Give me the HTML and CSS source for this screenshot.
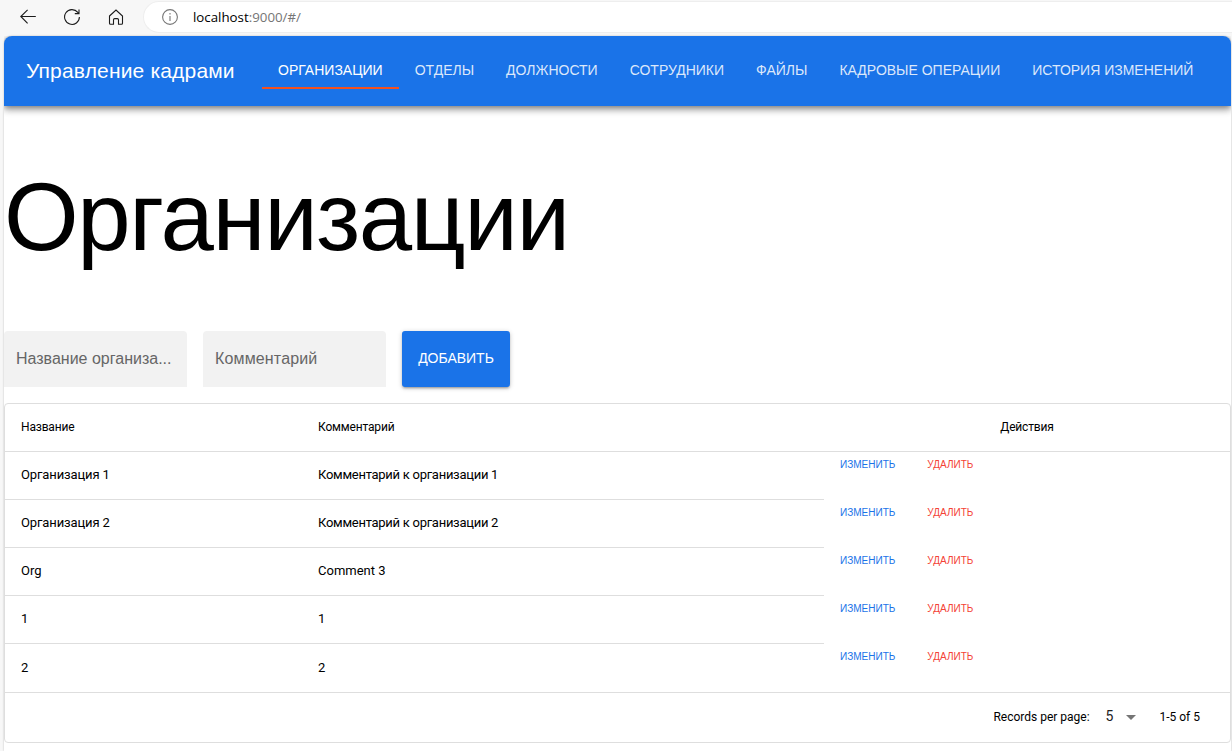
FILE: index.html
```html
<!DOCTYPE html>
<html lang="ru">
<head>
<meta charset="utf-8">
<title>Управление кадрами</title>
<link rel="stylesheet" href="styles.css">
</head>
<body>
<div class="browser">
  <div class="browser-bar">
    <svg class="nav-icon" viewBox="0 0 16 16"><path d="M15.8 7.5H.8M7.6 .9L.8 7.5L7.6 14.3"/></svg>
    <svg class="nav-icon" viewBox="0 0 16 16"><path d="M15.4 8A7.4 7.4 0 1 1 13.8 3.4L15 4.6M15 .5V4.6H10.8"/></svg>
    <svg class="nav-icon" viewBox="0 0 16 16"><path d="M1.5 7L8 1L14.5 7V14.3Q14.5 15.3 13.5 15.3H10.5V10.8Q10.5 9.6 9.3 9.6H6.7Q5.5 9.6 5.5 10.8V15.3H2.5Q1.5 15.3 1.5 14.3Z"/></svg>
    <div class="address">
      <svg class="info-icon" viewBox="0 0 16 16"><circle cx="8" cy="8" r="7.4"/><path d="M8 7V12M8 4V5.6"/></svg>
      <div class="url">localhost<span class="url-rest">:9000/#/</span></div>
    </div>
  </div>
  <div class="page">
    <header class="toolbar">
      <div class="brand">Управление кадрами</div>
      <nav class="tabs">
        <a class="tab tab-active">Организации</a>
        <a class="tab">Отделы</a>
        <a class="tab">Должности</a>
        <a class="tab">Сотрудники</a>
        <a class="tab">Файлы</a>
        <a class="tab">Кадровые операции</a>
        <a class="tab">История изменений</a>
      </nav>
    </header>
    <main>
      <h1 class="title">Организации</h1>
      <form class="form">
        <div class="field">Название организа...</div>
        <div class="field">Комментарий</div>
        <button class="add" type="button">Добавить</button>
      </form>
      <section class="table">
        <div class="row head"><div class="cell">Название</div><div class="cell">Комментарий</div><div class="cell center">Действия</div></div>
        <div class="row"><div class="cell">Организация 1</div><div class="cell comment">Комментарий к организации 1</div><div class="actions"><a class="edit">Изменить</a><a class="delete">Удалить</a></div></div>
        <div class="row"><div class="cell">Организация 2</div><div class="cell comment">Комментарий к организации 2</div><div class="actions"><a class="edit">Изменить</a><a class="delete">Удалить</a></div></div>
        <div class="row"><div class="cell latin">Org</div><div class="cell latin">Comment 3</div><div class="actions"><a class="edit">Изменить</a><a class="delete">Удалить</a></div></div>
        <div class="row"><div class="cell">1</div><div class="cell">1</div><div class="actions"><a class="edit">Изменить</a><a class="delete">Удалить</a></div></div>
        <div class="row last"><div class="cell">2</div><div class="cell">2</div><div class="actions"><a class="edit">Изменить</a><a class="delete">Удалить</a></div></div>
        <div class="pager">
          <span class="per-page">Records per page:</span>
          <span class="count">5</span>
          <svg class="caret" viewBox="0 0 10 5"><path d="M0 0H10L5 5Z"/></svg>
          <span class="range">1-5 of 5</span>
        </div>
      </section>
    </main>
  </div>
</div>
</body>
</html>
```
FILE: styles.css
```css
* { box-sizing: border-box; }
body { margin: 0; overflow: hidden; font-family: Roboto, "Liberation Sans", sans-serif; color: #000; }
.browser { width: 1232px; height: 751px; background: #f7f7f7; display: flex; flex-direction: column; }
.browser-bar { height: 36px; flex: none; display: flex; align-items: flex-start; padding: 1px 0 0 20px; }
.nav-icon { width: 16px; height: 16px; margin: 8px 28px 0 0; fill: none; stroke: #1b1b1b; stroke-width: 1.1; }
.address { flex: 1; height: 32px; margin-left: -9px; padding-left: 18px; display: flex; align-items: center; gap: 15px; background: #fff; border: 1px solid #eee; border-right: 0; border-radius: 16px 0 0 16px; }
.info-icon { width: 16px; height: 16px; fill: none; stroke: #767676; stroke-width: 1.1; }
.url { font: 13.3px/20px "Open Sans", sans-serif; }
.url-rest { color: #757575; }
.page { flex: 1; margin: 0 1px 0 4px; background: #fff; border-radius: 8px 8px 0 0; box-shadow: 0 0 2px rgba(0,0,0,.25); }
.toolbar { height: 70px; display: flex; align-items: center; padding-left: 22px; background: #1a73e8; color: #fff; border-radius: 8px 8px 0 0; box-shadow: 0 2px 4px -1px rgba(0,0,0,.2), 0 4px 7px rgba(0,0,0,.32), 0 1px 10px rgba(0,0,0,.12); font-family: "Liberation Sans", sans-serif; clip-path: inset(0 0 -12px 0); }
.brand { width: 236px; flex: none; font-size: 21px; line-height: 32px; letter-spacing: .17px; white-space: nowrap; }
.tabs { display: flex; padding-bottom: 1px; }
.tab { padding: 8px 16px; height: 37px; font-size: 14px; line-height: 20px; text-transform: uppercase; white-space: nowrap; color: rgba(255,255,255,.85); }
.tab-active { color: #fff; border-bottom: 2px solid #f4511e; }
.title { margin: 63px 0 65px; height: 97px; font: 400 96px/96px "Liberation Sans", sans-serif; letter-spacing: -1.45px; }
.form { display: flex; gap: 16px; font-family: "Liberation Sans", sans-serif; }
.field { width: 183px; height: 56px; padding: 0 12px; line-height: 55px; font-size: 16px; letter-spacing: .15px; color: #666; background: #f2f2f2; border-radius: 4px 4px 0 0; white-space: nowrap; }
.field:first-child { letter-spacing: 0; }
.add { width: 108px; height: 56px; padding: 0 0 2px; border: 0; border-radius: 3px; background: #1a73e8; color: #fff; font: 14px/24px "Liberation Sans", sans-serif; text-transform: uppercase; box-shadow: 0 1px 5px rgba(0,0,0,.2), 0 2px 2px rgba(0,0,0,.14), 0 3px 1px -2px rgba(0,0,0,.12); }
.table { margin-top: 16px; height: 340px; border: 1px solid #dedede; border-radius: 4px; }
.row { display: grid; grid-template-columns: 297px 522px 1fr; height: 48px; font-size: 13px; }
.cell { padding: 0 16px; line-height: 45px; letter-spacing: -.12px; border-bottom: 1px solid #dedede; }
.comment { letter-spacing: -.27px; }
.latin { letter-spacing: 0; }
.head { font-size: 12px; }
.head .cell { line-height: 46px; letter-spacing: -.17px; }
.center { text-align: center; }
.actions { display: flex; padding: 4px 16px; gap: 32px; font: 10px/18px "Liberation Sans", sans-serif; text-transform: uppercase; }
.edit { color: #1a73e8; }
.delete { color: #f44336; }
.last { height: 49px; border-bottom: 1px solid #dedede; }
.last .cell { border: 0; line-height: 47px; }
.pager { height: 47px; display: flex; align-items: center; justify-content: flex-end; padding-right: 30px; font-size: 12px; }
.count { margin-left: 16px; padding-bottom: 1px; font-size: 14px; color: #222; }
.caret { width: 10px; height: 5px; margin: 2px 23px 0 13px; fill: #757575; }
```
